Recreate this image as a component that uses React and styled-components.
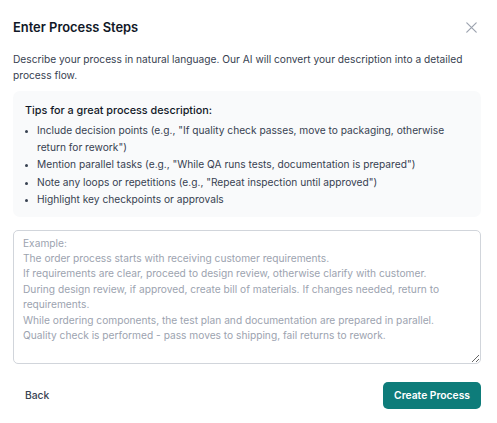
import React from "react"
import styled, { createGlobalStyle } from "styled-components"

const GlobalStyle = createGlobalStyle`
  * { box-sizing: border-box; }
  body {
    margin: 0;
    background: #ffffff;
    font-family: Inter, "Noto Sans", sans-serif;
    -webkit-font-smoothing: antialiased;
  }
`

const tips = [
  `Include decision points (e.g., "If quality check passes, move to packaging, otherwise return for rework")`,
  `Mention parallel tasks (e.g., "While QA runs tests, documentation is prepared")`,
  `Note any loops or repetitions (e.g., "Repeat inspection until approved")`,
  `Highlight key checkpoints or approvals`,
]

const placeholder = `Example:
The order process starts with receiving customer requirements.
If requirements are clear, proceed to design review, otherwise clarify with customer.
During design review, if approved, create bill of materials. If changes needed, return to requirements.
While ordering components, the test plan and documentation are prepared in parallel.
Quality check is performed - pass moves to shipping, fail returns to rework.`

const App = () => {
  return (
    <>
      <GlobalStyle />
      <Dialog>
        <Header>
          <Title>Enter Process Steps</Title>
          <CloseButton aria-label="Close">
            <svg width="11" height="11" viewBox="0 0 11 11" fill="none">
              <path
                d="M0.8 0.8L10.2 10.2M10.2 0.8L0.8 10.2"
                stroke="#9ca3af"
                strokeWidth="1.2"
                strokeLinecap="round"
              />
            </svg>
          </CloseButton>
        </Header>
        <Description>
          Describe your process in natural language. Our AI will convert your
          description into a detailed process flow.
        </Description>
        <TipsBox>
          <TipsTitle>Tips for a great process description:</TipsTitle>
          <TipsList>
            {tips.map(tip => (
              <li key={tip}>{tip}</li>
            ))}
          </TipsList>
        </TipsBox>
        <StepsInput placeholder={placeholder} />
        <Footer>
          <BackButton>Back</BackButton>
          <PrimaryButton>Create Process</PrimaryButton>
        </Footer>
      </Dialog>
    </>
  )
}

const Dialog = styled.div`
  width: 497px;
  height: 423px;
  padding: 17px 16px 0 13px;
  background: #ffffff;
  display: flex;
  flex-direction: column;
`

const Header = styled.div`
  display: flex;
  align-items: center;
  justify-content: space-between;
  height: 20px;
  margin-bottom: 15px;
`

const Title = styled.h2`
  margin: 0;
  font-size: 12.9px;
  font-weight: 600;
  color: #111827;
`

const CloseButton = styled.button`
  border: none;
  background: none;
  padding: 0;
  margin-right: 4px;
  display: flex;
  cursor: pointer;
`

const Description = styled.p`
  margin: 0 0 8px;
  font-size: 10.2px;
  line-height: 15.5px;
  color: #374151;
`

const TipsBox = styled.div`
  background: #f9fafb;
  border-radius: 7px;
  padding: 11px 12px 9px 12px;
  margin-bottom: 13px;
`

const TipsTitle = styled.div`
  font-size: 10.8px;
  font-weight: 500;
  color: #111827;
  line-height: 17px;
  margin-bottom: 3px;
`

const TipsList = styled.ul`
  margin: 0;
  padding-left: 12px;
  font-size: 10.2px;
  line-height: 16.5px;
  color: #374151;

  li + li {
    margin-top: 1px;
  }

  li::marker {
    font-size: 8px;
  }
`

const StepsInput = styled.textarea`
  width: 100%;
  height: 134px;
  border: 1px solid #d1d5db;
  border-radius: 5px;
  padding: 5px 9px;
  font-family: inherit;
  font-size: 10.2px;
  line-height: 15.4px;
  color: #111827;
  resize: vertical;
  outline: none;

  &::placeholder {
    color: #9ca3af;
  }
`

const Footer = styled.div`
  display: flex;
  align-items: center;
  justify-content: space-between;
  margin-top: 18px;
`

const BackButton = styled.button`
  border: none;
  background: none;
  padding: 6px 12px;
  font-family: inherit;
  font-size: 10.3px;
  font-weight: 500;
  color: #374151;
  cursor: pointer;
`

const PrimaryButton = styled.button`
  border: none;
  border-radius: 5px;
  background: #0e7c7a;
  color: #ffffff;
  height: 27px;
  padding: 0 11px;
  font-family: inherit;
  font-size: 10.3px;
  font-weight: 600;
  cursor: pointer;
`

export default App
